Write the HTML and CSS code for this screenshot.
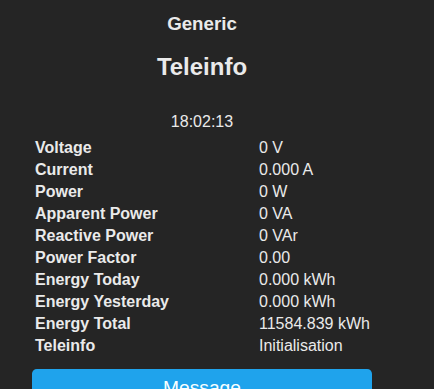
FILE: index.html
```html
<!DOCTYPE html>
<html>
<head>
<meta charset="utf-8">
<link rel="stylesheet" href="styles.css">
</head>
<body>
<div class="wrap">
  <div class="head">
    <h3 class="dev">Generic</h3>
    <h2 class="name">Teleinfo</h2>
  </div>
  <div class="time">18:02:13</div>
  <div class="sensors">
    <div class="k">Voltage</div><div class="v">0 V</div>
    <div class="k">Current</div><div class="v">0.000 A</div>
    <div class="k">Power</div><div class="v">0 W</div>
    <div class="k">Apparent Power</div><div class="v">0 VA</div>
    <div class="k">Reactive Power</div><div class="v">0 VAr</div>
    <div class="k">Power Factor</div><div class="v">0.00</div>
    <div class="k">Energy Today</div><div class="v">0.000 kWh</div>
    <div class="k">Energy Yesterday</div><div class="v">0.000 kWh</div>
    <div class="k">Energy Total</div><div class="v">11584.839 kWh</div>
    <div class="k">Teleinfo</div><div class="v">Initialisation</div>
  </div>
  <button class="btn">Message</button>
</div>
</body>
</html>
```
FILE: styles.css
```css
html, body {
  margin: 0;
  padding: 0;
  background: #252525;
  height: 100%;
  overflow: hidden;
}
body {
  font-family: "Liberation Sans", Arial, sans-serif;
  color: #eaeaea;
}
.wrap {
  width: 340px;
  margin-left: 32px;
}
.head {
  text-align: center;
}
.dev {
  font-size: 18.72px;
  font-weight: bold;
  margin: 12.7px 0 0;
  line-height: normal;
}
.name {
  font-size: 24px;
  font-weight: bold;
  margin: 18.8px 0 0;
  line-height: normal;
}
.time {
  text-align: center;
  font-size: 16px;
  margin-top: 31.2px;
  line-height: normal;
}
.sensors {
  display: grid;
  grid-template-columns: 224px 1fr;
  row-gap: 2px;
  margin-top: 7.6px;
  padding-left: 3px;
  font-size: 16px;
}
.k, .v {
  padding: 1px 0;
  line-height: normal;
  white-space: nowrap;
}
.k {
  font-weight: bold;
}
.btn {
  display: block;
  width: 340px;
  height: 38.4px;
  margin-top: 13px;
  border: 0;
  border-radius: 4.8px;
  background: #1fa3ec;
  color: #faffff;
  font-family: "Liberation Sans", Arial, sans-serif;
  font-size: 19.2px;
  line-height: 38.4px;
  padding: 0;
}
```
